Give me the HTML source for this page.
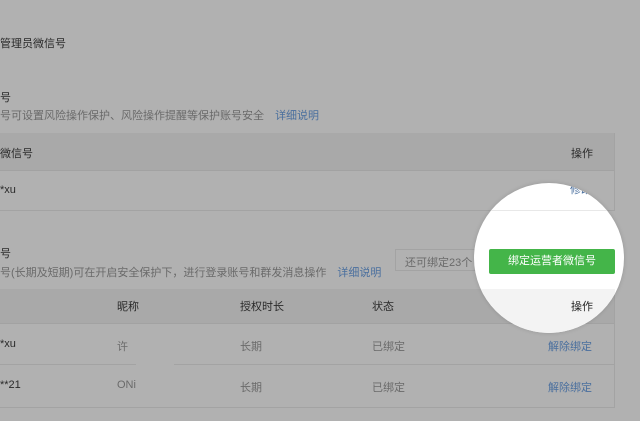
<!DOCTYPE html><html><head><meta charset="utf-8"><style>
body{margin:0;width:640px;height:421px;background:#b1b1b1;position:relative;overflow:hidden;font-family:"Liberation Sans","Noto Sans CJK SC",sans-serif;font-size:11px;color:#2a2a2a}
.a{position:absolute;white-space:nowrap}
.g{color:#6a6a6a}.l{color:#4a6f9e}
.hd{position:absolute;left:0;width:615px;background:#a9a9a9;border-bottom:1px solid #a2a2a2}
.ln{position:absolute;height:1px;background:#a3a3a3}
</style></head><body>
<div class="a" style="left:0;top:35px;font-size:11px">管理员微信号</div>
<div class="a" style="left:0;top:89px">号</div>
<div class="a g" style="left:0;top:107px">号可设置风险操作保护、风险操作提醒等保护账号安全 <span class="l" style="margin-left:8px">详细说明</span></div>
<div class="hd" style="top:133px;height:37px"></div>
<div class="a" style="left:0;top:145px">微信号</div><div class="a" style="left:571px;top:145px">操作</div>
<div class="a" style="left:0;top:184px">*xu</div>
<div class="ln" style="left:0;top:210px;width:615px"></div>
<div class="ln" style="left:614px;top:133px;width:1px;height:77px"></div>
<div class="a" style="left:0;top:245px">号</div>
<div class="a g" style="left:0;top:264px">号(长期及短期)可在开启安全保护下，进行登录账号和群发消息操作 <span class="l" style="margin-left:8px">详细说明</span></div>
<div class="a g" style="left:395px;top:249px;width:85px;height:22px;border:1px solid #a3a3a3;box-sizing:border-box;padding:4px 0 0 9px">还可绑定23个</div>
<div class="hd" style="top:289px;height:34px"></div>
<div class="a" style="left:117px;top:298px">昵称</div><div class="a" style="left:240px;top:298px">授权时长</div><div class="a" style="left:372px;top:298px">状态</div>
<div class="a" style="left:0;top:338px">*xu</div><div class="a g" style="left:117px;top:338px">许</div><div class="a g" style="left:240px;top:338px">长期</div><div class="a g" style="left:372px;top:338px">已绑定</div><div class="a l" style="left:548px;top:338px">解除绑定</div>
<div class="ln" style="left:0;top:364px;width:136px"></div><div class="ln" style="left:174px;top:364px;width:441px"></div>
<div class="a" style="left:0;top:379px">**21</div><div class="a g" style="left:117px;top:379px">ONi</div><div class="a g" style="left:240px;top:379px">长期</div><div class="a g" style="left:372px;top:379px">已绑定</div><div class="a l" style="left:548px;top:379px">解除绑定</div>
<div class="ln" style="left:0;top:407px;width:615px"></div>
<div class="ln" style="left:614px;top:289px;width:1px;height:118px"></div>
<div style="position:absolute;left:474px;top:183px;width:150px;height:150px;border-radius:50%;background:#fff;overflow:hidden;box-shadow:0 0 4px rgba(0,0,0,.15)">
 <div style="position:absolute;left:0;top:27px;width:141px;height:1px;background:#e8e8e8"></div>
 <div style="position:absolute;left:0;top:106px;width:141px;height:50px;background:#f3f3f3"></div>
 <div class="a" style="left:97px;top:115px;color:#222">操作</div>
 <div class="a" style="left:15px;top:66px;width:126px;height:25px;background:#44b549;border-radius:2px;color:#fff;text-align:center;line-height:25px">绑定运营者微信号</div>
 <div class="a l" style="left:96px;top:-2px">修改</div>
</div>
</body></html>
